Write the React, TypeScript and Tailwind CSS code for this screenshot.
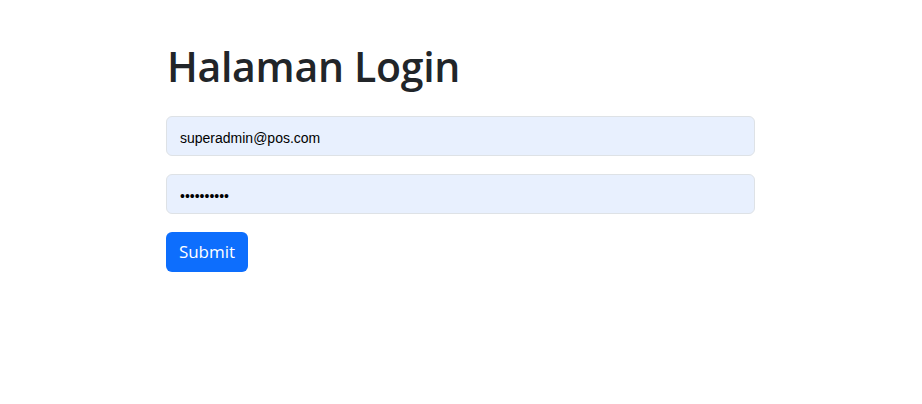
export default function App() {
    return (
        <div className="min-h-screen bg-white" style={{ fontFamily: '"Open Sans", "Noto Sans", sans-serif' }}>
            <div className="ml-[166px] w-[589px] pt-[37px]">
                <h1 className="text-[41px] leading-[58px] font-semibold text-[#212529] pl-[1px] tracking-[-0.3px]">
                    Halaman Login
                </h1>
                <form className="mt-[21px] flex flex-col">
                    <input
                        type="email"
                        defaultValue="superadmin@pos.com"
                        className="h-[40px] w-full rounded-[6px] border border-[#dee2e6] bg-[#e8f0fe] px-[13px] pt-[3px] text-[14px] text-black outline-none"
                        style={{ fontFamily: '"Liberation Sans", Arial, sans-serif' }}
                    />
                    <input
                        type="password"
                        defaultValue="1234567890"
                        className="mt-[18px] h-[40px] w-full rounded-[6px] border border-[#dee2e6] bg-[#e8f0fe] px-[13px] pt-[3px] text-[14px] text-black outline-none"
                        style={{ fontFamily: '"Liberation Sans", Arial, sans-serif' }}
                    />
                    <div className="mt-[18px]">
                        <button
                            type="button"
                            className="h-[40px] w-[82px] rounded-[6px] bg-[#0d6efd] text-[17px] text-white"
                        >
                            Submit
                        </button>
                    </div>
                </form>
            </div>
        </div>
    );
}
